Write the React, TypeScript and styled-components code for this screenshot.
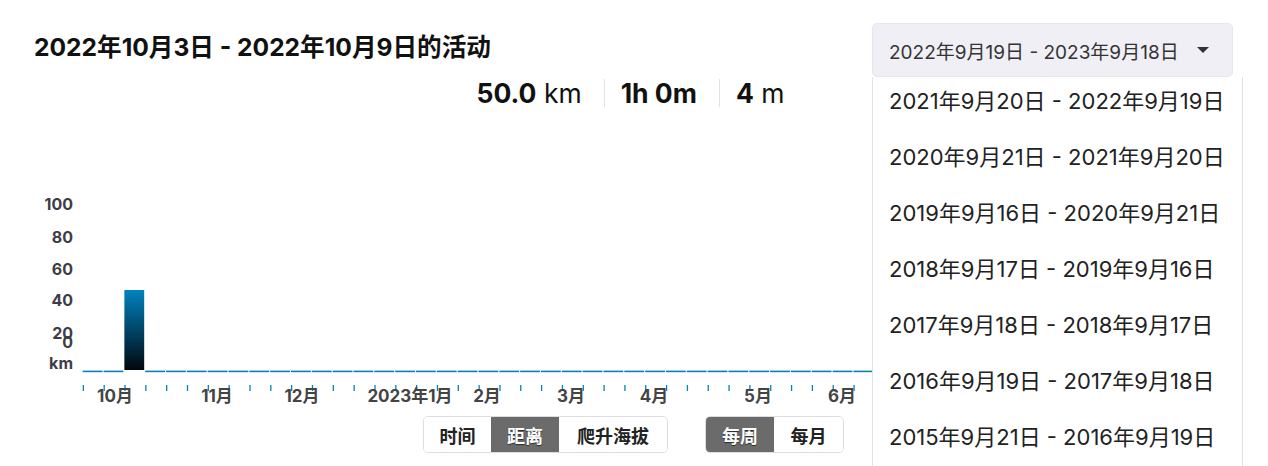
import styled, { createGlobalStyle } from 'styled-components';

const GlobalStyle = createGlobalStyle`
  html, body {
    margin: 0;
    padding: 0;
    background: #fff;
  }
  body {
    font-family: Inter, "Noto Sans CJK SC", sans-serif;
    color: #1a1a1a;
  }
`;

const FONT = 'Inter, "Noto Sans CJK SC", sans-serif';

const Page = styled.div`
  position: relative;
  width: 1268px;
  height: 466px;
  overflow: hidden;
  box-sizing: border-box;
  padding: 23px 35px 0 34px;
`;

const Header = styled.div`
  display: flex;
  justify-content: space-between;
  align-items: flex-start;
  height: 54px;
`;

const Title = styled.h2`
  margin: 0;
  font-size: 24.6px;
  line-height: 48px;
  font-weight: 700;
  color: #111;
`;

const RangePicker = styled.div`
  position: relative;
  z-index: 5;
`;

const RangeButton = styled.button`
  display: flex;
  align-items: center;
  height: 54px;
  width: 361px;
  box-sizing: border-box;
  padding: 0 23px 0 16px;
  border: 1px solid #e6e6ec;
  border-radius: 5px;
  background: #f0eff5;
  font-family: ${FONT};
  font-size: 19px;
  color: #333;
  white-space: nowrap;
  cursor: pointer;
`;

const Caret = styled.span`
  margin-left: auto;
  width: 0;
  height: 0;
  border-left: 6px solid transparent;
  border-right: 6px solid transparent;
  border-top: 6px solid #333;
`;

const Menu = styled.ul`
  position: absolute;
  top: 100%;
  left: 0;
  width: 371px;
  box-sizing: border-box;
  margin: 0;
  padding: 0;
  list-style: none;
  background: #fff;
  border: 1px solid #e2e2e8;
  border-top: none;
`;

const MenuItem = styled.li`
  padding: 0 16px 8px;
  line-height: 48px;
  font-size: 22px;
  color: #222;
  white-space: nowrap;
`;

const Stats = styled.div`
  display: flex;
  justify-content: center;
  align-items: center;
  height: 32px;
`;

const Stat = styled.div`
  padding: 0 22px 0 16px;
  font-size: 26.5px;
  line-height: 28px;
  color: #111;
  white-space: nowrap;
  & + & {
    border-left: 1px solid #e3e3e3;
  }
  b {
    font-weight: 700;
  }
`;

const Chart = styled.svg`
  display: block;
  overflow: visible;
`;

const Toggles = styled.div`
  display: flex;
  justify-content: center;
  gap: 37px;
  margin-top: 6px;
`;

const Group = styled.div`
  display: flex;
  border: 1px solid #dcdce2;
  border-radius: 5px;
  overflow: hidden;
`;

const Toggle = styled.button<{ $active?: boolean; $w: number }>`
  width: ${(p) => p.$w}px;
  height: 35px;
  border: none;
  padding: 0;
  font-family: ${FONT};
  font-size: 18px;
  font-weight: 700;
  color: ${(p) => (p.$active ? '#fff' : '#222')};
  background: ${(p) => (p.$active ? '#6b6b6b' : '#fff')};
  text-shadow: ${(p) => (p.$active ? '0 1px 1px rgba(0,0,0,0.6)' : 'none')};
  cursor: pointer;
`;

const ranges = [
  '2021年9月20日 - 2022年9月19日',
  '2020年9月21日 - 2021年9月20日',
  '2019年9月16日 - 2020年9月21日',
  '2018年9月17日 - 2019年9月16日',
  '2017年9月18日 - 2018年9月17日',
  '2016年9月19日 - 2017年9月18日',
  '2015年9月21日 - 2016年9月19日',
];

// weekly distance in km, week 0 starts 2022-09-19
const weeks = Array.from({ length: 52 }, (_, i) => (i === 2 ? 47 : 0));

const X0 = 48.7;
const STEP = 20.83;
const BASE = 261;
const PX_PER_KM = 80 / 47;

const yLabels = [
  { t: '100', y: 101 },
  { t: '80', y: 134 },
  { t: '60', y: 166 },
  { t: '40', y: 197 },
  { t: '20', y: 230 },
  { t: '0', y: 239 },
  { t: 'km', y: 260 },
];

// visible month labels (the rest of the year sits under the open menu)
const months = [
  { t: '10月', x: 81 },
  { t: '11月', x: 183 },
  { t: '12月', x: 268 },
  { t: '2023年1月', x: 376 },
  { t: '2月', x: 453 },
  { t: '3月', x: 537 },
  { t: '4月', x: 620 },
  { t: '5月', x: 724 },
  { t: '6月', x: 808 },
];

function WeeklyChart() {
  return (
    <Chart width={1199} height={301} viewBox="0 0 1199 301">
      <defs>
        <linearGradient id="barFill" x1="0" y1="0" x2="0" y2="1">
          <stop offset="0" stopColor="#0083bf" />
          <stop offset="1" stopColor="#00070d" />
        </linearGradient>
      </defs>
      <g fontFamily={FONT} fontSize="16" fontWeight="700" fill="#3d3d45" textAnchor="end">
        {yLabels.map((l) => (
          <text key={l.t} x={39} y={l.y}>
            {l.t}
          </text>
        ))}
      </g>
      {weeks.map((km, i) => {
        const x = X0 + i * STEP;
        if (km === 0) {
          return <rect key={i} x={x} y={BASE + 0.6} width={STEP - 1} height={1.6} fill="#0a80b8" />;
        }
        const h = km * PX_PER_KM;
        return <rect key={i} x={x} y={BASE - h} width={STEP - 1} height={h} fill="url(#barFill)" />;
      })}
      {weeks.map((_, i) => (
        <rect key={'t' + i} x={X0 + i * STEP} y={276} width={1.3} height={6} fill="#0a80b8" />
      ))}
      <g fontFamily={FONT} fontSize="17" fontWeight="700" fill="#444" textAnchor="middle">
        {months.map((m) => (
          <text key={m.t} x={m.x} y={293}>
            {m.t}
          </text>
        ))}
      </g>
    </Chart>
  );
}

export default function App() {
  return (
    <>
      <GlobalStyle />
      <Page>
        <Header>
          <Title>2022年10月3日 - 2022年10月9日的活动</Title>
          <RangePicker>
            <RangeButton>
              2022年9月19日 - 2023年9月18日
              <Caret />
            </RangeButton>
            <Menu>
              {ranges.map((r) => (
                <MenuItem key={r}>{r}</MenuItem>
              ))}
            </Menu>
          </RangePicker>
        </Header>
        <Stats>
          <Stat>
            <b>50.0</b> km
          </Stat>
          <Stat>
            <b>1h 0m</b>
          </Stat>
          <Stat>
            <b>4</b> m
          </Stat>
        </Stats>
        <WeeklyChart />
        <Toggles>
          <Group>
            <Toggle $w={67}>时间</Toggle>
            <Toggle $w={68} $active>
              距离
            </Toggle>
            <Toggle $w={108}>爬升海拔</Toggle>
          </Group>
          <Group>
            <Toggle $w={68} $active>
              每周
            </Toggle>
            <Toggle $w={69}>每月</Toggle>
          </Group>
        </Toggles>
      </Page>
    </>
  );
}
